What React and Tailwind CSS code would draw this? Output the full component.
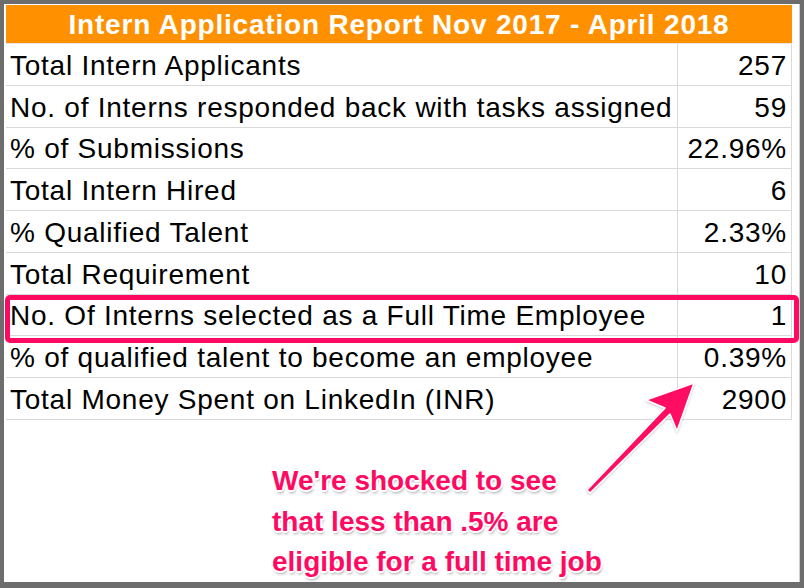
import React from "react";

const rows = [
  ["Total Intern Applicants", "257"],
  ["No. of Interns responded back with tasks assigned", "59"],
  ["% of Submissions", "22.96%"],
  ["Total Intern Hired", "6"],
  ["% Qualified Talent", "2.33%"],
  ["Total Requirement", "10"],
  ["No. Of Interns selected as a Full Time Employee", "1"],
  ["% of qualified talent to become an employee", "0.39%"],
  ["Total Money Spent on LinkedIn (INR)", "2900"],
];

export default function App() {
  return (
    <div
      className="w-[804px] h-[588px] bg-[#6d6d6d] pt-[4px] pl-[4px] pr-[4px] pb-[6px] overflow-hidden"
      style={{ fontFamily: '"Liberation Sans", Arial, sans-serif' }}
    >
      <div className="relative w-full h-full bg-white pl-[2px] pt-[1px] border-r border-[#cfcfcf]">
        <div className="w-[786px]">
          <div className="h-[39px] bg-[#ff9100] flex items-center justify-center text-white font-bold text-[28px] tracking-[0.8px] leading-none border-b border-[#e6e6e6] pt-[1px]">
            Intern Application Report Nov 2017 - April 2018
          </div>
          {rows.map(([label, value], i) => (
            <div
              key={i}
              className="flex h-[41.75px] border-b border-[#d9d9d9] border-r text-black text-[28px] tracking-[0.75px] leading-none"
            >
              <div className="w-[672px] flex items-center pl-[4px] pt-[3px] border-r border-[#d9d9d9] whitespace-nowrap">
                {label}
              </div>
              <div className="flex-1 flex items-center justify-end pr-[4px] pt-[3px]">{value}</div>
            </div>
          ))}
        </div>

        {/* highlight box */}
        <div className="absolute left-[1px] top-[291px] w-[794px] h-[48px] border-[5px] border-[#ff0a62] rounded-[5px]" />

        {/* arrow */}
        <svg
          className="absolute left-0 top-0"
          width="798"
          height="578"
          viewBox="0 0 798 578"
        >
          <defs>
            <filter id="sh" x="-20%" y="-20%" width="140%" height="140%">
              <feDropShadow dx="0" dy="1" stdDeviation="1" floodColor="#000" floodOpacity="0.25" />
            </filter>
          </defs>
          <polygon
            points="583,486 661,404 642,396 690,379 673,427 666,410 586,489"
            fill="#ff0a62"
            stroke="#ffffff"
            strokeWidth="1.5"
            strokeLinejoin="round"
            filter="url(#sh)"
          />
        </svg>

        {/* annotation */}
        <div
          className="absolute left-[268px] top-[457px] text-[#ff0a62] font-bold text-[28px] leading-[40.5px] whitespace-nowrap"
          style={{
            textShadow:
              "1px 1px 0 #fff, -1px -1px 0 #fff, 1px -1px 0 #fff, -1px 1px 0 #fff, 0 2px 0 #fff, 2px 0 0 #fff, -2px 0 0 #fff, 0 -2px 0 #fff, 1px 3px 3px rgba(0,0,0,0.35)",
          }}
        >
          <div>We're shocked to see</div>
          <div>that less than .5% are</div>
          <div>eligible for a full time job</div>
        </div>
      </div>
    </div>
  );
}
